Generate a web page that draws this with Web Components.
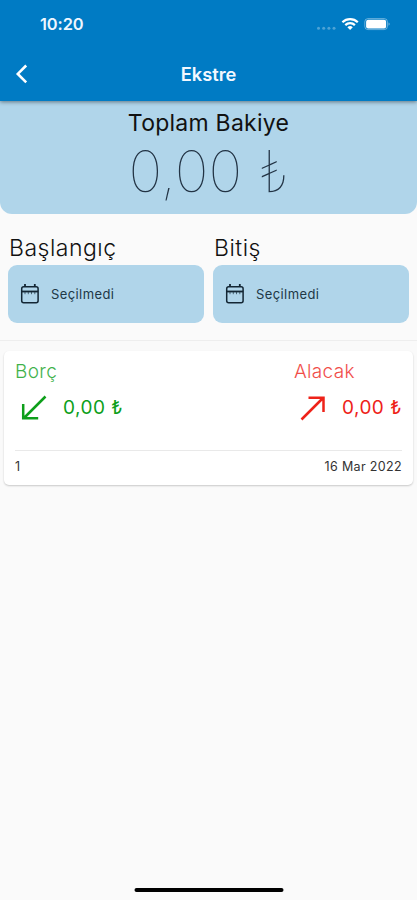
<!DOCTYPE html>
<html lang="tr">
<head>
<meta charset="utf-8">
<title>Ekstre</title>
<style>
html,body{margin:0;height:100%;background:#fafafa}
body{font-family:Inter,"Liberation Sans",sans-serif;color:#111}
</style>
</head>
<body>
<statement-screen></statement-screen>
<script>
const define = (name, html) => customElements.define(name, class extends HTMLElement {
  constructor() {
    super();
    const t = document.createElement('template');
    t.innerHTML = html;
    this.attachShadow({mode: 'open'}).append(t.content.cloneNode(true));
  }
});

define('status-bar', `
<style>
:host{display:flex;height:47px;box-sizing:border-box;padding:15px 27px 0 40px;justify-content:space-between;color:#eef6ff}
time{font-size:16.4px;font-weight:600;line-height:19px;letter-spacing:-.1px}
svg{display:block}
</style>
<time>10:20</time>
<svg width="76" height="20" viewBox="0 0 76 20">
  <g fill="#fff" opacity=".3"><circle cx="4.5" cy="13.3" r="1.5"/><circle cx="9.7" cy="13.3" r="1.5"/><circle cx="14.9" cy="13.3" r="1.5"/><circle cx="20" cy="13.3" r="1.5"/></g>
  <g fill="none" stroke="#fff" stroke-width="2.2"><path d="M28.4 7.2a11 11 0 0 1 15.4 0"/><path d="M31.3 10.1a6.8 6.8 0 0 1 9.6 0"/></g>
  <path d="M33.4 12.3a3.8 3.8 0 0 1 5.4 0L36.1 15z" fill="#fff"/>
  <rect x="50.8" y="3.6" width="22.6" height="11" rx="3.2" fill="none" stroke="#fff" stroke-opacity=".4"/>
  <rect x="52.1" y="4.7" width="20" height="8.8" rx="2" fill="#fff"/>
  <path d="M74.5 7.5c1.6.5 1.6 2.7 0 3.2z" fill="#fff" opacity=".45"/>
</svg>`);

define('nav-bar', `
<style>
:host{display:grid;grid-template-columns:60px 1fr 60px;height:54px;align-items:center}
svg{display:block;margin-left:15px}
h1{margin:0;font-size:18.3px;font-weight:600;line-height:24px;color:#f2f8ff;text-align:center}
</style>
<svg width="14" height="22" viewBox="0 0 14 22"><path d="M11.2 2.5 2.8 10.9l8.4 8.4" fill="none" stroke="#fff" stroke-width="2.6"/></svg>
<h1><slot></slot></h1>`);

define('balance-panel', `
<style>
:host{display:flex;flex-direction:column;align-items:center;height:113px;background:#b0d5ea;border-radius:0 0 12px 12px;box-sizing:border-box;padding-top:7px}
.label{font-size:23px;line-height:30px;letter-spacing:.25px}
.sum{font-size:57px;font-weight:100;line-height:68px;color:#234;white-space:nowrap}
</style>
<div class="label"><slot name="label"></slot></div>
<div class="sum"><slot name="sum"></slot></div>`);

define('date-field', `
<style>
:host{display:block;width:196px}
.label{font-size:23px;font-weight:300;line-height:30px;letter-spacing:.5px;padding-left:1px}
.box{display:flex;align-items:center;gap:11px;height:58px;margin-top:2px;padding-left:12px;box-sizing:border-box;border-radius:9px;background:#b0d5ea;font-size:13px;letter-spacing:.4px;color:#213846}
svg{display:block}
</style>
<div class="label"><slot></slot></div>
<div class="box">
<svg width="20" height="22" viewBox="0 0 20 22" fill="none" stroke="#132634">
  <rect x="1.7" y="3.8" width="16.4" height="16" rx="2" stroke-width="1.5"/>
  <path d="M1.7 8.5h16.4" stroke-width="1.8"/><path d="M5 1v3M14.8 1v3" stroke-width="1.8"/>
  <path d="M5 9v2.2M8.3 9v2.2M11.5 9v2.2M14.8 9v2.2" stroke-width="1" opacity=".65"/>
</svg><span>Seçilmedi</span></div>`);

define('amount-block', `
<style>
:host{display:block}
.label{font-size:19px;font-weight:300;line-height:24px;letter-spacing:.35px;opacity:.8}
.row{display:flex;align-items:center;height:28px;margin-top:10px;padding-left:6px;gap:16px}
.value{font-size:19px;line-height:24px;letter-spacing:.5px;white-space:nowrap}
</style>
<div class="label"><slot name="label"></slot></div>
<div class="row"><slot name="icon"></slot><span class="value"><slot></slot></span></div>`);

define('entry-card', `
<style>
:host{display:block;margin:10px 4px 0;height:134px;box-sizing:border-box;padding:9px 11px 0;background:#fff;border-radius:5px;box-shadow:0 1px 2px rgba(0,0,0,.2)}
.amounts{display:flex;justify-content:space-between;height:90px}
.foot{display:flex;justify-content:space-between;border-top:1px solid #e9e9e9;padding-top:8px;font-size:12.5px;line-height:16px;letter-spacing:.35px;color:#333}
</style>
<div class="amounts"><slot></slot></div>
<div class="foot"><slot name="number"></slot><slot name="date"></slot></div>`);

define('statement-screen', `
<style>
:host{display:flex;flex-direction:column;height:900px;overflow:hidden;background:#fafafa}
header{position:relative;height:101px;background:#007bc4;box-shadow:0 1px 4px rgba(0,0,0,.45);flex:none}
.dates{display:flex;justify-content:space-between;padding:19px 8px 0;height:127px;box-sizing:border-box;border-bottom:1px solid #eee}
amount-block{flex:none}
svg{display:block}
.credit{color:#0e9f1b}.debit{color:#ee2219}
.home{width:149px;height:4px;border-radius:2px;background:#000;margin:auto auto 8px;transform:translateX(.5px)}
</style>
<header><status-bar></status-bar><nav-bar>Ekstre</nav-bar></header>
<balance-panel><span slot="label">Toplam Bakiye</span><span slot="sum">0,00 ₺</span></balance-panel>
<div class="dates"><date-field>Başlangıç</date-field><date-field>Bitiş</date-field></div>
<entry-card>
  <amount-block class="credit"><span slot="label">Borç</span>
    <svg slot="icon" width="26" height="26" viewBox="0 0 26 26" fill="none" stroke="currentColor" stroke-width="2.5"><path d="M24.5 1.5 3 23M2.2 9v14.2h15"/></svg>0,00 ₺</amount-block>
  <amount-block class="debit"><span slot="label">Alacak</span>
    <svg slot="icon" width="26" height="26" viewBox="0 0 26 26" fill="none" stroke="currentColor" stroke-width="2.5"><path d="M1.5 24.5 23 3M8.5 2.8h15V17"/></svg>0,00 ₺</amount-block>
  <span slot="number">1</span><span slot="date">16 Mar 2022</span>
</entry-card>
<div class="home"></div>`);
</script>
</body>
</html>
